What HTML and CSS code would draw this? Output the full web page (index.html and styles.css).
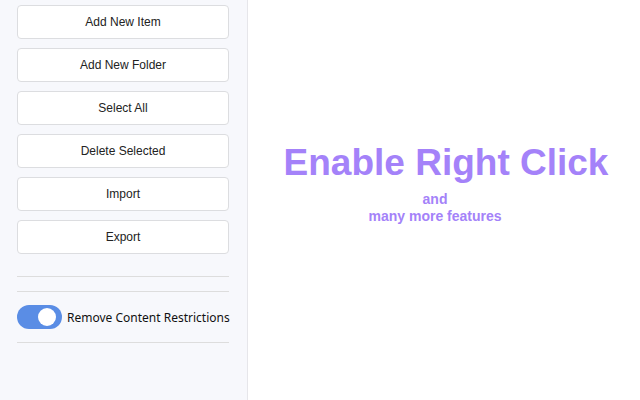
FILE: index.html
```html
<!DOCTYPE html>
<html>
<head>
<meta charset="utf-8">
<link rel="stylesheet" href="styles.css">
</head>
<body>
<div class="app">
  <aside class="sidebar">
    <div class="buttons">
      <button class="btn">Add New Item</button>
      <button class="btn">Add New Folder</button>
      <button class="btn">Select All</button>
      <button class="btn">Delete Selected</button>
      <button class="btn">Import</button>
      <button class="btn">Export</button>
    </div>
    <hr class="rule rule-first">
    <hr class="rule rule-second">
    <div class="toggle-row">
      <span class="toggle"><span class="knob"></span></span>
      <span class="toggle-label">Remove Content Restrictions</span>
    </div>
    <hr class="rule rule-last">
  </aside>
  <main class="main">
    <h1 class="title">Enable Right Click</h1>
    <p class="sub">and<br>many more features</p>
  </main>
</div>
</body>
</html>
```
FILE: styles.css
```css
html, body {
  margin: 0;
  padding: 0;
  height: 100%;
  background: #ffffff;
}
.app {
  display: flex;
  height: 400px;
  width: 640px;
}
.sidebar {
  width: 247px;
  border-right: 1px solid #e6e6ea;
  background: #f7f8fc;
  box-sizing: content-box;
  padding: 5px 0 0 0;
  display: flex;
  flex-direction: column;
}
.buttons {
  display: flex;
  flex-direction: column;
  gap: 9px;
  padding: 0 18px 0 17px;
}
.btn {
  height: 34px;
  width: 212px;
  background: #ffffff;
  border: 1px solid #dcdde0;
  border-radius: 4px;
  font-family: "Liberation Sans", Arial, sans-serif;
  font-size: 12px;
  color: #222222;
  padding: 0;
}
.rule {
  border: 0;
  border-top: 1px solid #dddddd;
  margin: 0 18px 0 17px;
  width: 212px;
}
.rule-first { margin-top: 22px; }
.rule-second { margin-top: 14px; }
.rule-last { margin-top: 13px; }
.toggle-row {
  display: flex;
  align-items: center;
  gap: 5px;
  margin: 13px 0 0 17px;
  height: 24px;
}
.toggle {
  width: 45px;
  height: 24px;
  border-radius: 12px;
  background: #5a8de5;
  display: flex;
  align-items: center;
  box-sizing: border-box;
  padding-left: 21px;
}
.knob {
  width: 18px;
  height: 18px;
  border-radius: 50%;
  background: #ffffff;
}
.toggle-label {
  font-family: "Noto Sans", "Open Sans", sans-serif;
  font-size: 12px;
  color: #111111;
  padding-top: 1px;
}
.main {
  flex: 1;
  display: flex;
  flex-direction: column;
  align-items: center;
  padding-top: 141px;
  font-family: "Liberation Sans", Arial, sans-serif;
  color: #a482f9;
}
.title {
  margin: 0 0 0 4px;
  font-size: 37px;
  font-weight: bold;
  line-height: 44px;
}
.sub {
  margin: 6px 18px 0 0;
  font-size: 14px;
  font-weight: bold;
  line-height: 17px;
  text-align: center;
}
```
